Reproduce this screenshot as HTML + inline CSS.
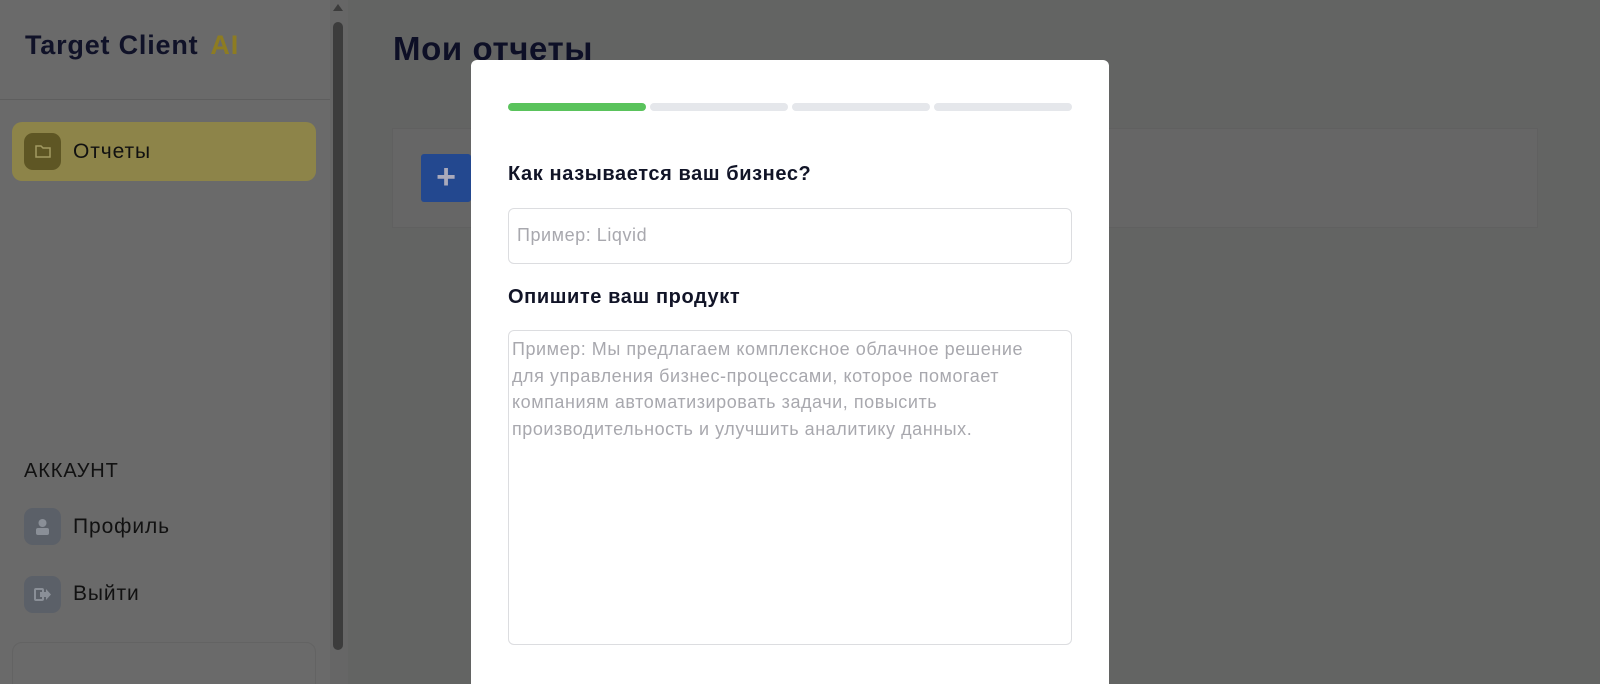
<!DOCTYPE html>
<html><head><meta charset="utf-8"><style>
*{box-sizing:border-box;margin:0;padding:0}
html,body{width:1600px;height:684px;overflow:hidden}
body{background:#636463;font-family:"Liberation Sans","DejaVu Sans",sans-serif;position:relative}
.side{position:absolute;left:0;top:0;width:330px;height:684px;background:#6a6a6a}
.sb{position:absolute;left:330px;top:0;width:18px;height:684px;background:#666}
.thumb{position:absolute;left:333px;top:22px;width:10px;height:628px;background:#3c3c3c;border-radius:5px}
.arrow{position:absolute;left:333px;top:4px;width:0;height:0;border-left:5px solid transparent;border-right:5px solid transparent;border-bottom:7px solid #3c3c3c}
.logo{position:absolute;left:25px;top:30px;font-size:27px;font-weight:bold;color:#101228;letter-spacing:0.8px}
.logo span{color:#8d7c22;margin-left:12px}
.hr{position:absolute;left:0;top:99px;width:330px;height:1px;background:#5e5e5e}
.nav{position:absolute;left:12px;top:122px;width:304px;height:59px;background:#8d8449;border-radius:10px}
.ic{position:absolute;width:37px;height:37px;border-radius:9px}
.t{position:absolute;font-size:21px;color:#111;letter-spacing:0.9px}
.main h1{position:absolute;left:393px;top:30px;font-size:33px;font-weight:bold;color:#0d0f26;letter-spacing:0.6px}
.card{position:absolute;left:392px;top:128px;width:1146px;height:100px;background:#666;border:1px solid #606060}
.plus{position:absolute;left:421px;top:154px;width:50px;height:48px;background:#23488f;border-radius:3px;color:#aab;font-size:34px;font-weight:bold;text-align:center;line-height:46px}
.modal{position:absolute;left:471px;top:60px;width:638px;height:624px;background:#fff;border-radius:6px 6px 0 0}
.bar{position:absolute;top:43px;height:8px;border-radius:4px;background:#e5e7eb}
.lab{position:absolute;left:37px;font-size:20px;font-weight:bold;color:#111427;letter-spacing:0.6px}
.inp{position:absolute;left:37px;width:564px;border:1.5px solid #dcdde0;border-radius:6px;color:#a8a8ae;font-size:18px;letter-spacing:0.55px;white-space:nowrap}
</style></head><body>
<div class="side"></div>
<div class="sb"></div><div class="arrow"></div><div class="thumb"></div>
<div class="logo">Target Client<span>AI</span></div>
<div class="hr"></div>
<div class="nav"></div>
<div class="ic" style="left:24px;top:133px;background:#5e5624"><svg width="37" height="37"><path d="M12 13h5l2 2h7v9H12z" fill="none" stroke="#a29a62" stroke-width="1.5"/></svg></div>
<div class="t" style="left:73px;top:140px">Отчеты</div>
<div class="t" style="left:24px;top:460px;font-size:20px">АККАУНТ</div>
<div class="ic" style="left:24px;top:508px;background:#5b6068"><svg width="37" height="37"><circle cx="18.5" cy="15" r="4" fill="#8a8f97"/><rect x="12" y="20" width="13" height="7" rx="2" fill="#8a8f97"/></svg></div>
<div class="t" style="left:73px;top:515px">Профиль</div>
<div class="ic" style="left:24px;top:576px;background:#5b6068"><svg width="37" height="37"><rect x="11" y="13" width="8" height="11" rx="1" fill="none" stroke="#8a8f97" stroke-width="2"/><path d="M16 16h6v-3l5 5.5-5 5.5v-3h-6z" fill="#8a8f97"/></svg></div>
<div class="t" style="left:73px;top:582px">Выйти</div>
<div style="position:absolute;left:12px;top:642px;width:304px;height:60px;border:1px solid #636363;border-radius:10px"></div>
<div class="main"><h1>Мои отчеты</h1></div>
<div class="card"></div>
<div class="plus">+</div>
<div class="modal">
<div class="bar" style="left:37px;width:138px;background:#5ac35c"></div>
<div class="bar" style="left:179px;width:138px"></div>
<div class="bar" style="left:321px;width:138px"></div>
<div class="bar" style="left:463px;width:138px"></div>
<div class="lab" style="top:103px">Как называется ваш бизнес?</div>
<div class="inp" style="top:148px;height:56px;padding:16px 8px">Пример: Liqvid</div>
<div class="lab" style="top:226px">Опишите ваш продукт</div>
<div class="inp" style="top:270px;height:315px;padding:5px 3px;line-height:26.5px">Пример: Мы предлагаем комплексное облачное решение<br>для управления бизнес-процессами, которое помогает<br>компаниям автоматизировать задачи, повысить<br>производительность и улучшить аналитику данных.</div>
</div>
</body></html>
